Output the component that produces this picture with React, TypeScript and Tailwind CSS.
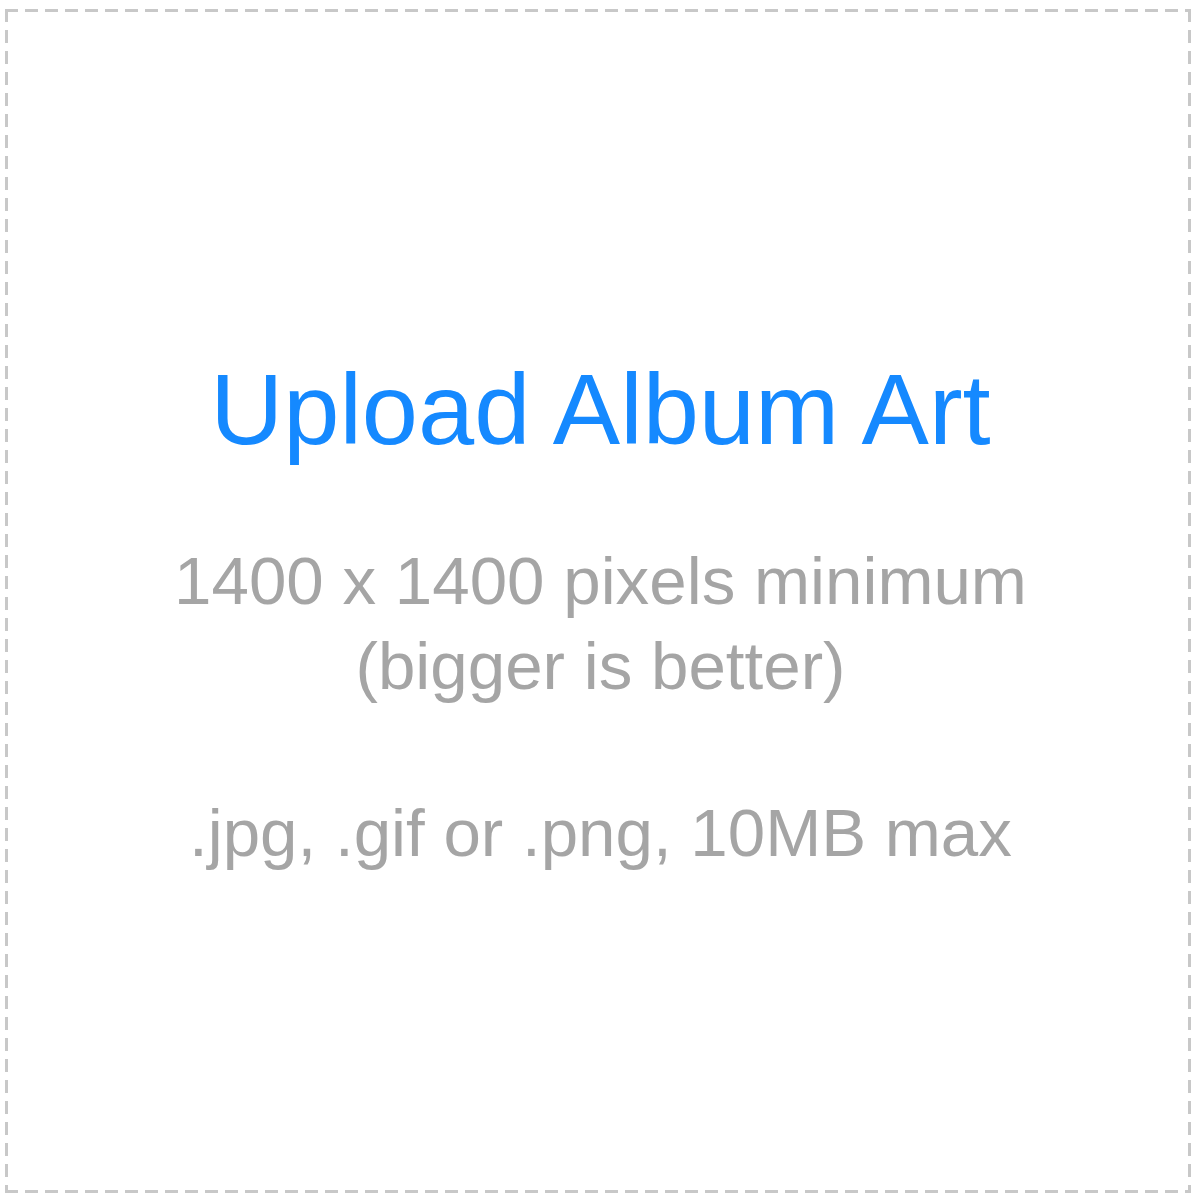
export default function App() {
  return (
    <div className="w-[1196px] h-[1200px] bg-white pt-[9px] pl-[5px]" style={{ fontFamily: '"Liberation Sans", Arial, sans-serif' }}>
      <div className="w-[1186px] h-[1184px] p-[3px] bg-no-repeat bg-[image:repeating-linear-gradient(90deg,#c8c8c8_0_13px,transparent_13px_20px),repeating-linear-gradient(90deg,#c8c8c8_0_13px,transparent_13px_20px),repeating-linear-gradient(180deg,#c8c8c8_0_13px,transparent_13px_21px),repeating-linear-gradient(180deg,#c8c8c8_0_13px,transparent_13px_21px)] bg-[size:100%_3px,100%_3px,3px_100%,3px_100%] bg-[position:top,bottom,left,right]">
        <div className="flex flex-col items-center pt-[340px] pl-[5px]">
          <div className="text-[101px] leading-[115px] text-[#1589ff]">Upload Album Art</div>
          <div className="mt-[71px] text-[67.3px] leading-[85px] text-[#a5a5a5] text-center">
            <div>1400 x 1400 pixels minimum</div>
            <div>(bigger is better)</div>
            <div className="mt-[82px]">.jpg, .gif or .png, 10MB max</div>
          </div>
        </div>
      </div>
    </div>
  );
}
